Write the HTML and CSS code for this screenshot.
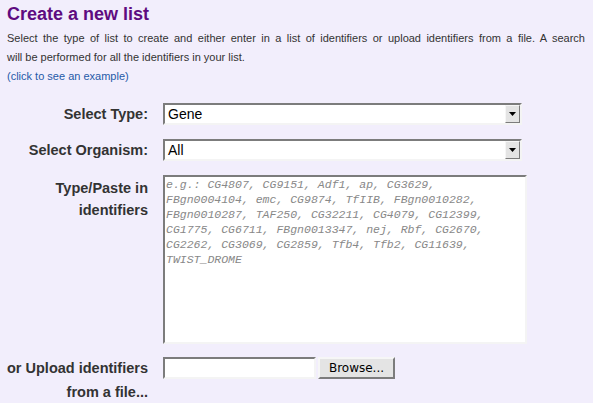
FILE: index.html
```html
<!DOCTYPE html>
<html>
<head>
<meta charset="utf-8">
<title>Create a new list</title>
<link rel="stylesheet" href="styles.css">
</head>
<body>
<div class="page">
  <h1 class="title">Create a new list</h1>
  <p class="intro"><span class="intro-line intro-line-full">Select the type of list to create and either enter in a list of identifiers or upload identifiers from a file. A search</span> <span class="intro-line">will be performed for all the identifiers in your list.</span></p>
  <a class="example" href="#">(click to see an example)</a>
  <form class="form">
    <label class="label">Select Type:</label>
    <div class="select">
      <span class="select-value">Gene</span>
      <span class="select-arrow"><svg width="7" height="4" viewBox="0 0 7 4"><path d="M0 0H7L3.5 4Z" fill="#000"/></svg></span>
    </div>

    <label class="label">Select Organism:</label>
    <div class="select">
      <span class="select-value">All</span>
      <span class="select-arrow"><svg width="7" height="4" viewBox="0 0 7 4"><path d="M0 0H7L3.5 4Z" fill="#000"/></svg></span>
    </div>

    <label class="label label-top">Type/Paste in<br>identifiers</label>
    <textarea class="ids" spellcheck="false">e.g.: CG4807, CG9151, Adf1, ap, CG3629,
FBgn0004104, emc, CG9874, TfIIB, FBgn0010282,
FBgn0010287, TAF250, CG32211, CG4079, CG12399,
CG1775, CG6711, FBgn0013347, nej, Rbf, CG2670,
CG2262, CG3069, CG2859, Tfb4, Tfb2, CG11639,
TWIST_DROME</textarea>

    <label class="label label-upload">or Upload identifiers<br>from a file...</label>
    <div class="upload">
      <input class="file-text" type="text">
      <button class="browse" type="button">Browse...</button>
    </div>
  </form>
</div>
</body>
</html>
```

FILE: styles.css
```css
html, body {
  margin: 0;
  padding: 0;
  background: #f2eefc;
}

body {
  font-family: "Liberation Sans", Arial, sans-serif;
  color: #333;
}

.page {
  padding: 0 0 0 7px;
}

.title {
  margin: 0;
  padding-top: 3px;
  font-size: 18px;
  line-height: 22px;
  font-weight: bold;
  color: #5e0b80;
}

.intro {
  margin: 4px 0 0 0;
  width: 578px;
  font-size: 11px;
  line-height: 19px;
  color: #333;
}

.intro-line {
  display: block;
}

.intro-line-full {
  text-align: justify;
  text-align-last: justify;
}

.example {
  display: block;
  font-size: 11px;
  line-height: 19px;
  color: #1f5aa8;
  text-decoration: none;
}

.form {
  margin-top: 17px;
  display: grid;
  grid-template-columns: 141px 364px;
  column-gap: 15px;
  row-gap: 13px;
}

.label {
  font-size: 14.5px;
  font-weight: bold;
  line-height: 23px;
  text-align: right;
  align-self: center;
  white-space: nowrap;
  color: #333;
}

.label-top {
  align-self: start;
  padding-top: 3px;
  line-height: 21.5px;
}

.label-upload {
  align-self: start;
  margin-top: -1px;
  line-height: 24px;
}

.select {
  width: 359px;
  height: 22px;
  box-sizing: border-box;
  display: flex;
  align-items: center;
  background: #fff;
  border-style: solid;
  border-width: 2px;
  border-color: #7c7c7c #f4f4f4 #f4f4f4 #7c7c7c;
}

.select-value {
  flex: 1;
  padding-left: 3px;
  font-family: "Liberation Sans", Arial, sans-serif;
  font-size: 14px;
  color: #000;
}

.select-arrow {
  width: 15px;
  height: 18px;
  box-sizing: border-box;
  display: flex;
  align-items: center;
  justify-content: center;
  background: #e4e4e4;
  border-style: solid;
  border-width: 1px;
  border-color: #f6f6f6 #7c7c7c #7c7c7c #f6f6f6;
}

.ids {
  display: block;
  width: 364px;
  height: 169px;
  box-sizing: border-box;
  margin: 0;
  padding: 0 1px;
  resize: none;
  overflow: hidden;
  background: #fff;
  border-style: solid;
  border-width: 2px;
  border-color: #7c7c7c #f4f4f4 #f4f4f4 #7c7c7c;
  font-family: "Liberation Mono", "Courier New", monospace;
  font-style: italic;
  font-size: 11.5px;
  line-height: 15px;
  color: #888;
  white-space: pre;
  outline: none;
}

.upload {
  display: flex;
  align-items: stretch;
  gap: 2px;
  height: 22px;
}

.file-text {
  width: 153px;
  height: 22px;
  box-sizing: border-box;
  margin: 0;
  padding: 0 2px;
  background: #fff;
  border-style: solid;
  border-width: 2px;
  border-color: #7c7c7c #f4f4f4 #f4f4f4 #7c7c7c;
  outline: none;
}

.browse {
  width: 77px;
  height: 22px;
  box-sizing: border-box;
  margin: 0;
  padding: 0;
  background: #e4e4e4;
  border-style: solid;
  border-width: 2px;
  border-color: #f6f6f6 #7c7c7c #7c7c7c #f6f6f6;
  font-family: "DejaVu Sans", sans-serif;
  font-size: 12px;
  color: #000;
}
```
